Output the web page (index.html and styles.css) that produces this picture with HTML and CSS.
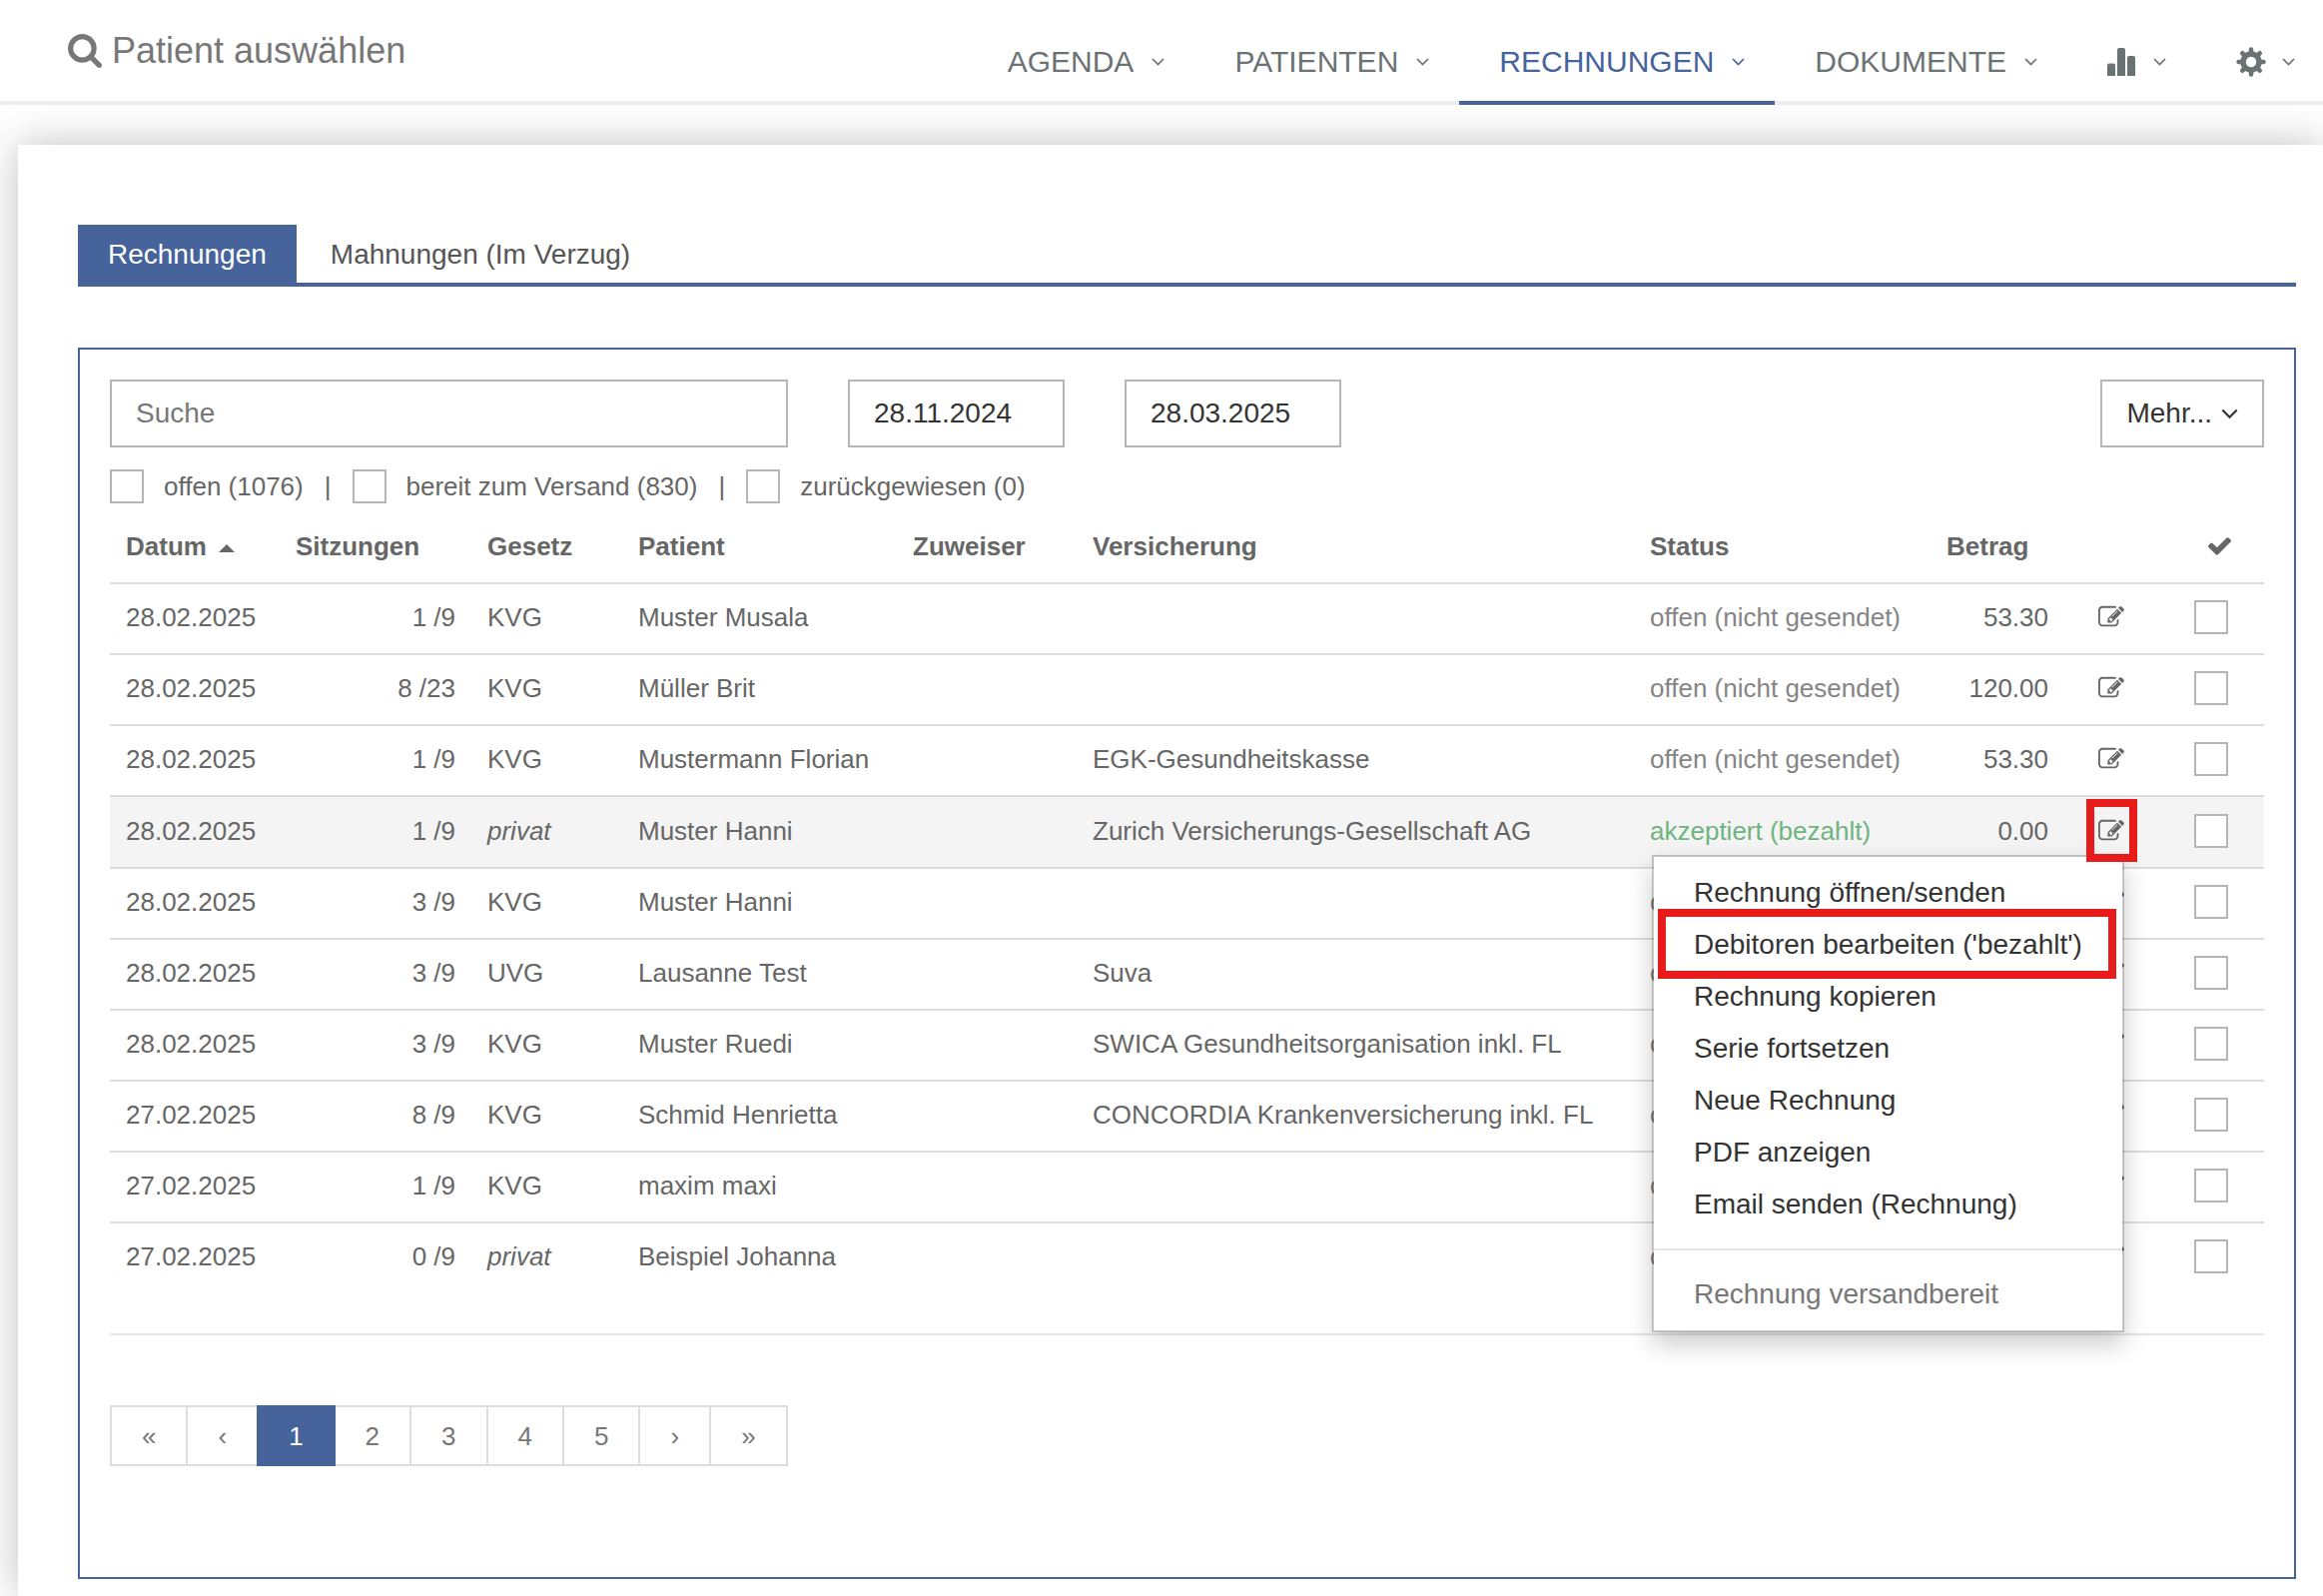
FILE: index.html
```html
<!DOCTYPE html>
<html lang="de">
<head>
<meta charset="utf-8">
<title>Rechnungen</title>
<link rel="stylesheet" href="styles.css">
</head>
<body>
<svg class="sprite" aria-hidden="true">
  <symbol id="i-search" viewBox="64 128 1664 1664"><path d="M1216 832q0-185-131.500-316.500t-316.500-131.500-316.500 131.500-131.500 316.500 131.500 316.500 316.500 131.500 316.500-131.500 131.500-316.500zm512 832q0 52-38 90t-90 38q-54 0-90-38l-343-342q-179 124-399 124-143 0-273.500-55.500t-225-150-150-225-55.500-273.500 55.500-273.500 150-225 225-150 273.500-55.500 273.500 55.500 225 150 150 225 55.500 273.500q0 220-124 399l343 343q37 37 37 90z"/></symbol>
  <symbol id="i-down" viewBox="0 0 13 8"><path d="M1 1l5.500 5.500L12 1" fill="none" stroke="currentColor" stroke-width="1.700"/></symbol>
  <symbol id="i-bars" viewBox="0 -1 30 30"><path d="M0 28V17.500q0-2 2-2h4q2 0 2 2V28zM10 28V2q0-2 2-2h4q2 0 2 2v26zM20 28V10q0-2 2-2h4q2 0 2 2v18z"/></symbol>
  <symbol id="i-gear" viewBox="-15 -15 30 30"><g fill="none" stroke="currentColor"><circle r="8" stroke-width="5.500"/><path stroke-width="4.600" stroke-linecap="round" d="M0-9.500V-12.400M0 9.500V12.400M-9.500 0H-12.400M9.500 0H12.400M7-7L8.700-8.700M-7-7L-8.700-8.700M7 7L8.700 8.700M-7 7L-8.700 8.700"/></g></symbol>
  <symbol id="i-edit" viewBox="0 0 1792 1792"><path d="M888 1184l116-116-152-152-116 116v56h96v96h56zm440-720q-16-16-33 1l-350 350q-17 17-1 33t33-1l350-350q17-17 1-33zm80 594v190q0 119-84.500 203.500t-203.500 84.500h-832q-119 0-203.500-84.500t-84.500-203.500v-832q0-119 84.500-203.500t203.500-84.500h832q63 0 117 25 15 7 18 23 3 17-9 29l-49 49q-14 14-32 8-23-6-45-6h-832q-66 0-113 47t-47 113v832q0 66 47 113t113 47h832q66 0 113-47t47-113v-126q0-13 9-22l64-64q15-15 35-7t20 29zm-96-738l288 288-672 672h-288v-288zm444 132l-92 92-288-288 92-92q28-28 68-28t68 28l152 152q28 28 28 68t-28 68z"/></symbol>
  <symbol id="i-check" viewBox="121 338 1550 1184"><path d="M1671 566q0 40-28 68l-724 724-136 136q-28 28-68 28t-68-28l-136-136-362-362q-28-28-28-68t28-68l136-136q28-28 68-28t68 28l294 295 656-657q28-28 68-28t68 28l136 136q28 28 28 68z"/></symbol>
</svg>

<header class="topbar">
  <a class="patient" href="#"><svg class="patient-icon"><use href="#i-search"/></svg>Patient auswählen</a>
  <nav class="nav">
    <a href="#">AGENDA<svg class="down"><use href="#i-down"/></svg></a>
    <a href="#">PATIENTEN<svg class="down"><use href="#i-down"/></svg></a>
    <a href="#" class="current" aria-current="page">RECHNUNGEN<svg class="down"><use href="#i-down"/></svg></a>
    <a href="#">DOKUMENTE<svg class="down"><use href="#i-down"/></svg></a>
    <a href="#" aria-label="Statistik"><svg class="nav-icon"><use href="#i-bars"/></svg><svg class="down"><use href="#i-down"/></svg></a>
    <a href="#" aria-label="Einstellungen"><svg class="nav-icon"><use href="#i-gear"/></svg><svg class="down"><use href="#i-down"/></svg></a>
  </nav>
</header>

<main class="page">
  <div class="tabs">
    <a href="#" class="tab active">Rechnungen</a>
    <a href="#" class="tab">Mahnungen (Im Verzug)</a>
  </div>

  <section class="panel">
    <form class="filters">
      <input class="field search" type="text" placeholder="Suche" aria-label="Suche">
      <input class="field date" type="text" value="28.11.2024" aria-label="Von">
      <input class="field date" type="text" value="28.03.2025" aria-label="Bis">
      <button class="field more" type="button">Mehr...<svg class="more-down"><use href="#i-down"/></svg></button>
    </form>
    <div class="checks">
      <label><input type="checkbox" class="box">offen (1076)</label>
      <span>|</span>
      <label><input type="checkbox" class="box">bereit zum Versand (830)</label>
      <span>|</span>
      <label><input type="checkbox" class="box">zurückgewiesen (0)</label>
    </div>

    <table class="invoices">
      <colgroup><col class="c-date"><col class="c-sessions"><col class="c-law"><col class="c-patient"><col class="c-referrer"><col><col class="c-status"><col class="c-amount"><col class="c-edit"><col class="c-select"></colgroup>
      <thead>
        <tr><th>Datum<span class="sort"></span></th><th>Sitzungen</th><th>Gesetz</th><th>Patient</th><th>Zuweiser</th><th>Versicherung</th><th>Status</th><th>Betrag</th><th></th><th class="mark"><svg class="check"><use href="#i-check"/></svg></th></tr>
      </thead>
      <tbody>
        <tr><td>28.02.2025</td><td class="num">1 /9</td><td>KVG</td><td>Muster Musala</td><td></td><td></td><td class="open">offen (nicht gesendet)</td><td class="num">53.30</td><td class="edit"><button type="button" aria-label="Bearbeiten"><svg><use href="#i-edit"/></svg></button></td><td><input type="checkbox" class="box" aria-label="Auswählen"></td></tr>
        <tr><td>28.02.2025</td><td class="num">8 /23</td><td>KVG</td><td>Müller Brit</td><td></td><td></td><td class="open">offen (nicht gesendet)</td><td class="num">120.00</td><td class="edit"><button type="button" aria-label="Bearbeiten"><svg><use href="#i-edit"/></svg></button></td><td><input type="checkbox" class="box" aria-label="Auswählen"></td></tr>
        <tr><td>28.02.2025</td><td class="num">1 /9</td><td>KVG</td><td>Mustermann Florian</td><td></td><td>EGK-Gesundheitskasse</td><td class="open">offen (nicht gesendet)</td><td class="num">53.30</td><td class="edit"><button type="button" aria-label="Bearbeiten"><svg><use href="#i-edit"/></svg></button></td><td><input type="checkbox" class="box" aria-label="Auswählen"></td></tr>
        <tr class="hovered"><td>28.02.2025</td><td class="num">1 /9</td><td><em>privat</em></td><td>Muster Hanni</td><td></td><td>Zurich Versicherungs-Gesellschaft AG</td><td class="paid">akzeptiert (bezahlt)</td><td class="num">0.00</td><td class="edit"><div class="dropdown"><button type="button" class="marked" aria-label="Bearbeiten"><svg><use href="#i-edit"/></svg></button>
          <ul class="menu">
            <li><a href="#">Rechnung öffnen/senden</a></li>
            <li class="marked"><a href="#">Debitoren bearbeiten ('bezahlt')</a></li>
            <li><a href="#">Rechnung kopieren</a></li>
            <li><a href="#">Serie fortsetzen</a></li>
            <li><a href="#">Neue Rechnung</a></li>
            <li><a href="#">PDF anzeigen</a></li>
            <li><a href="#">Email senden (Rechnung)</a></li>
            <li class="disabled"><a href="#">Rechnung versandbereit</a></li>
          </ul></div></td><td><input type="checkbox" class="box" aria-label="Auswählen"></td></tr>
        <tr><td>28.02.2025</td><td class="num">3 /9</td><td>KVG</td><td>Muster Hanni</td><td></td><td></td><td class="open">offen</td><td></td><td class="edit"><button type="button" aria-label="Bearbeiten"><svg><use href="#i-edit"/></svg></button></td><td><input type="checkbox" class="box" aria-label="Auswählen"></td></tr>
        <tr><td>28.02.2025</td><td class="num">3 /9</td><td>UVG</td><td>Lausanne Test</td><td></td><td>Suva</td><td class="open">offen</td><td></td><td class="edit"><button type="button" aria-label="Bearbeiten"><svg><use href="#i-edit"/></svg></button></td><td><input type="checkbox" class="box" aria-label="Auswählen"></td></tr>
        <tr><td>28.02.2025</td><td class="num">3 /9</td><td>KVG</td><td>Muster Ruedi</td><td></td><td>SWICA Gesundheitsorganisation inkl. FL</td><td class="open">offen</td><td></td><td class="edit"><button type="button" aria-label="Bearbeiten"><svg><use href="#i-edit"/></svg></button></td><td><input type="checkbox" class="box" aria-label="Auswählen"></td></tr>
        <tr><td>27.02.2025</td><td class="num">8 /9</td><td>KVG</td><td>Schmid Henrietta</td><td></td><td>CONCORDIA Krankenversicherung inkl. FL</td><td class="open">offen</td><td></td><td class="edit"><button type="button" aria-label="Bearbeiten"><svg><use href="#i-edit"/></svg></button></td><td><input type="checkbox" class="box" aria-label="Auswählen"></td></tr>
        <tr><td>27.02.2025</td><td class="num">1 /9</td><td>KVG</td><td>maxim maxi</td><td></td><td></td><td class="open">offen</td><td></td><td class="edit"><button type="button" aria-label="Bearbeiten"><svg><use href="#i-edit"/></svg></button></td><td><input type="checkbox" class="box" aria-label="Auswählen"></td></tr>
        <tr><td>27.02.2025</td><td class="num">0 /9</td><td><em>privat</em></td><td>Beispiel Johanna</td><td></td><td></td><td class="open">offen</td><td></td><td class="edit"><button type="button" aria-label="Bearbeiten"><svg><use href="#i-edit"/></svg></button></td><td><input type="checkbox" class="box" aria-label="Auswählen"></td></tr>
      </tbody>
    </table>

    <nav class="pages" aria-label="Seiten">
      <a href="#">«</a><a href="#">‹</a><a href="#" class="active">1</a><a href="#">2</a><a href="#">3</a><a href="#">4</a><a href="#">5</a><a href="#">›</a><a href="#">»</a>
    </nav>
  </section>
</main>
</body>
</html>
```
FILE: styles.css
```css
* { box-sizing: border-box; }

body {
  margin: 0;
  background: #fff;
  color: #666;
  font: 26px/34px "Liberation Sans", Arial, sans-serif;
  overflow-x: hidden;
}

a { color: inherit; text-decoration: none; }
svg { fill: currentColor; display: block; }
.sprite { position: absolute; width: 0; height: 0; }

/* top bar */
.topbar {
  display: flex;
  justify-content: space-between;
  height: 105px;
  border-bottom: 4px solid #eee;
}
.patient {
  display: flex;
  align-items: center;
  gap: 10px;
  height: 102px;
  padding-left: 68px;
  color: #777;
  font-size: 36px;
}
.patient-icon { width: 34px; height: 34px; }
.nav { display: flex; height: 105px; color: #6b7274; font-size: 30px; }
.nav a {
  display: flex;
  align-items: center;
  padding: 22px 30px 0 40px;
  border-bottom: 4px solid transparent;
}
.nav a:last-child { padding-right: 28px; }
.nav .current { color: #46639c; border-color: #46639c; }
.down { width: 13px; height: 8px; margin-left: 18px; }
.nav-icon { width: 30px; height: 30px; }
.nav-icon + .down { margin-left: 16px; }

/* sheet */
.page {
  margin: 40px 0 0 18px;
  padding: 80px 27px 17px 60px;
  background: #fff;
  box-shadow: 0 0 40px rgba(0, 0, 0, .25);
}
.tabs { display: flex; border-bottom: 4px solid #46639c; font-size: 28px; color: #555; }
.tab { padding: 13px 34px 11px; }
.tab.active { padding: 13px 30px 11px; background: #46639c; color: #fff; }

.panel {
  margin-top: 61px;
  padding: 30px 30px 111px;
  border: 2px solid #46639c;
}

.filters { display: flex; }
.field {
  height: 68px;
  padding: 0 24px;
  border: 2px solid #b5b5b5;
  border-radius: 0;
  background: #fff;
  color: #333;
  font: inherit;
  font-size: 28px;
}
.field::placeholder { color: #777; opacity: 1; }
.search { width: 679px; }
.date { width: 217px; margin-left: 60px; }
.more { display: flex; align-items: center; margin-left: auto; }
.more-down { width: 17px; height: 11px; margin-left: 9px; }

.checks { display: flex; gap: 21px; margin-top: 22px; }
.checks label { display: flex; gap: 20px; }
.box {
  appearance: none;
  display: block;
  flex: none;
  width: 34px;
  height: 34px;
  margin: 0;
  border: 2px solid #b5b5b5;
  background: #fff;
}

/* invoices */
.invoices {
  width: 100%;
  table-layout: fixed;
  border-collapse: separate;
  border-spacing: 0;
  margin-top: 10px;
  border-bottom: 2px solid #e4e4e4;
}
.c-date { width: 170px; }
.c-sessions { width: 192px; }
.c-law { width: 151px; }
.c-patient { width: 275px; }
.c-referrer { width: 180px; }
.c-status { width: 297px; }
.c-amount { width: 134px; }
.c-edit { width: 114px; }
.c-select { width: 86px; }
.invoices th { padding: 16px 16px 19px; text-align: left; }
.invoices td {
  padding: 16px 16px 19px;
  border-top: 2px solid #ddd;
  vertical-align: top;
  white-space: nowrap;
}
.invoices tbody tr:last-child td { padding-bottom: 60px; }
.invoices .num { text-align: right; }
.invoices .mark { padding-left: 30px; }
.check { width: 23px; height: 18px; }
.sort {
  display: inline-block;
  margin: 0 0 3px 12px;
  border: 8px solid transparent;
  border-top: 0;
  border-bottom-color: #666;
}
.open { color: #858585; }
.paid { color: #6fb480; }
.hovered { background: #f4f4f4; }
.invoices .hovered td { padding-top: 17px; }

.invoices .edit { padding-left: 34px; }
.edit button {
  position: relative;
  display: flex;
  align-items: center;
  width: 26px;
  height: 34px;
  padding: 0;
  border: 0;
  background: none;
  color: #666;
}
.edit button svg { width: 26px; height: 26px; }

/* red highlight frames */
.marked::after {
  content: "";
  position: absolute;
  border: 8px solid #e81b1b;
  pointer-events: none;
}
button.marked::after { inset: -15px -13px -14px -12px; z-index: 3; }
.menu .marked { position: relative; }
.menu .marked::after { inset: -10px 6px -8px 4px; }

.dropdown { position: relative; width: 26px; }
.dropdown button { z-index: 3; }
.menu {
  position: absolute;
  top: 41px;
  right: 0;
  z-index: 2;
  width: 473px;
  margin: 0;
  padding: 10px 0 10px;
  list-style: none;
  border: 2px solid rgba(0, 0, 0, .2);
  background: #fff;
  background-clip: padding-box;
  box-shadow: 0 12px 24px rgba(0, 0, 0, .2);
  color: #333;
  font-size: 28px;
  line-height: 52px;
}
.menu a { display: block; padding: 0 40px; }
.menu .disabled {
  margin-top: 18px;
  padding-top: 18px;
  border-top: 2px solid #e5e5e5;
  color: #777;
}

/* pagination */
.pages { display: flex; margin: 70px 0 0 2px; color: #777; }
.pages a {
  margin-left: -2px;
  padding: 12px 30px 11px;
  border: 2px solid #ddd;
}
.pages .active { position: relative; background: #46639c; border-color: #46639c; color: #fff; }
```
